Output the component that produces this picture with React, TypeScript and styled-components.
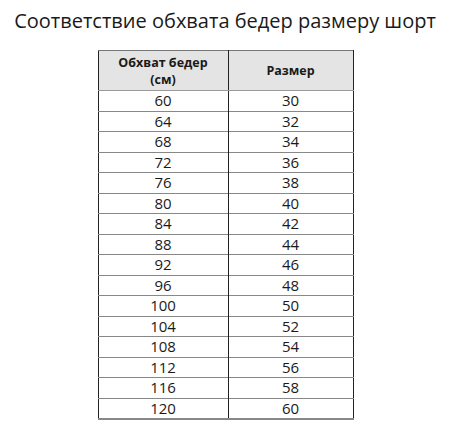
import React from "react";
import styled, { createGlobalStyle } from "styled-components";

const Global = createGlobalStyle`
  html, body { margin: 0; padding: 0; background: #ffffff; }
  body { font-family: "Open Sans", "Noto Sans", sans-serif; color: #1a1a1a; }
`;

const Page = styled.div`
  width: 450px;
  height: 436px;
  display: flex;
  flex-direction: column;
  align-items: center;
  box-sizing: border-box;
  padding-top: 7px;
`;

const Title = styled.h1`
  margin: 0;
  font-family: "Open Sans", sans-serif;
  font-weight: 400;
  font-size: 20px;
  line-height: 28px;
  color: #1a1a1a;
  white-space: nowrap;
`;

const Table = styled.table`
  margin-top: 15px;
  margin-left: 1px;
  border-collapse: collapse;
  table-layout: fixed;
  width: 255px;
  border-left: 1.5px solid #222;
  border-right: 1.5px solid #222;
  border-top: 1px solid #777;
  border-bottom: 2px solid #888;
`;

const HeadCell = styled.th<{ $w: number }>`
  width: ${(p) => p.$w}px;
  height: 40px;
  box-sizing: border-box;
  padding: 0 4px;
  background: #e4e4e4;
  font-family: "Open Sans", sans-serif;
  font-weight: 700;
  font-size: 12.5px;
  line-height: 17px;
  text-align: center;
  color: #1a1a1a;
  border-bottom: 1px solid #999;
  & + & { border-left: 1.5px solid #222; }
`;

const Row = styled.tr`
  height: 20.5px;
  & + & td { border-top: 1.5px solid #888; }
`;

const Cell = styled.td`
  padding: 0;
  font-family: "Open Sans", sans-serif;
  font-size: 15px;
  line-height: 19px;
  text-align: center;
  color: #1a1a1a;
  & + & { border-left: 1.5px solid #222; }
`;

const rows: [number, number][] = [
  [60, 30], [64, 32], [68, 34], [72, 36], [76, 38], [80, 40], [84, 42], [88, 44],
  [92, 46], [96, 48], [100, 50], [104, 52], [108, 54], [112, 56], [116, 58], [120, 60],
];

export default function App() {
  return (
    <Page>
      <Global />
      <Title>Соответствие обхвата бедер размеру шорт</Title>
      <Table>
        <thead>
          <tr>
            <HeadCell $w={130}>Обхват бедер<br />(см)</HeadCell>
            <HeadCell $w={125}>Размер</HeadCell>
          </tr>
        </thead>
        <tbody>
          {rows.map(([a, b]) => (
            <Row key={a}>
              <Cell>{a}</Cell>
              <Cell>{b}</Cell>
            </Row>
          ))}
        </tbody>
      </Table>
    </Page>
  );
}
